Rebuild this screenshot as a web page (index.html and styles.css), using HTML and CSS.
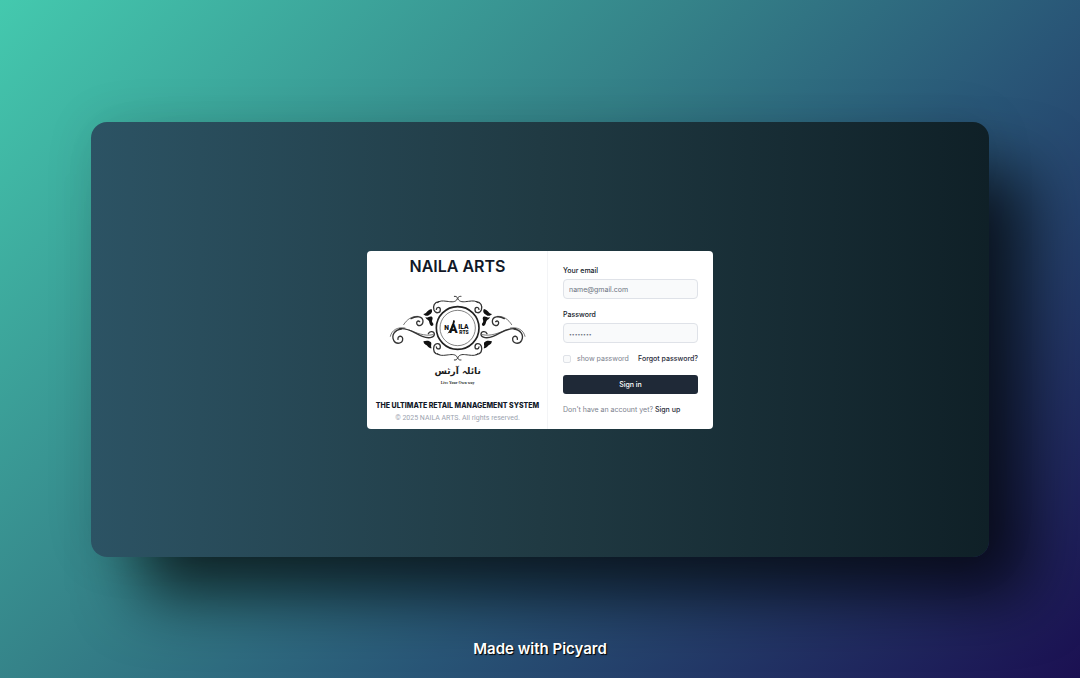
FILE: index.html
```html
<!DOCTYPE html>
<html lang="en">
<head>
<meta charset="utf-8">
<title>Naila Arts</title>
<link rel="stylesheet" href="styles.css">
</head>
<body class="page">
<main class="window">
  <div class="card">
    <section class="brand">
      <h1 class="brand-name">NAILA ARTS</h1>
      <svg class="logo" viewBox="84 156 426 285" role="img" aria-label="Naila Arts logo">
        <defs>
          <g id="corner" fill="none" stroke="#333" stroke-linecap="round">
            <path stroke-width="3" d="M286 169C294 168 298 174 293 180C286 188 274 185 264 184C249 182 242 182 235 188"/>
            <path stroke-width="4" d="M240 185C226 186 221 198 225 210C230 222 244 220 244 209C244 200 233 200 232 208"/>
          </g>
          <g id="side">
            <use href="#corner"/>
            <use href="#corner" transform="matrix(1 0 0 -1 0 529)"/>
            <g fill="none" stroke="#333" stroke-linecap="round">
              <path stroke-width="2" d="M94 289C98 270 116 260 138 264"/>
              <path stroke-width="4" d="M122 266C152 263 169 282 190 289C207 296 225 294 226 283C226 273 211 272 208 281"/>
              <path stroke-width="2" d="M150 270C172 278 195 290 222 284"/>
              <path stroke-width="4" d="M127 267C106 270 97 286 104 301C112 315 132 311 131 296C130 285 115 287 117 298"/>
              <path stroke-width="2" d="M134 254C144 238 158 228 177 229"/>
              <path stroke-width="4" d="M156 236C173 226 191 230 192 243C192 259 174 261 173 249C173 243 178 241 182 245"/>
            </g>
            <g fill="#111">
              <path d="M193 222C203 221 206 209 217 207C222 214 218 221 211 224C205 230 197 228 193 222Z"/>
              <path d="M199 232C208 234 211 227 219 230C224 236 217 240 220 247C225 252 224 258 218 258C210 253 212 246 209 242C205 238 202 238 199 232Z"/>
              <path d="M193 304C201 301 212 301 216 307C219 314 214 317 218 325C207 324 206 316 200 314C193 311 195 307 193 304Z"/>
            </g>
          </g>
        </defs>
        <use href="#side"/>
        <use href="#side" transform="matrix(-1 0 0 1 592 0)"/>
        <circle cx="296" cy="264" r="64" fill="#fff" stroke="#222" stroke-width="5"/>
        <circle cx="296" cy="264" r="53" fill="none" stroke="#444" stroke-width="2"/>
        <g class="logo-mark">
          <text x="256" y="271" font-size="20">N</text>
          <text x="270" y="278" font-size="38">A</text>
          <text x="298" y="267" font-size="20">ILA</text>
          <text x="301" y="283" font-size="15">RTS</text>
        </g>
        <path d="M283 240C279 258 274 270 265 281C278 273 285 258 288 242Z" fill="#111"/>
        <text class="logo-urdu" x="296" y="402" font-size="27">نائلہ آرٹس</text>
        <text class="logo-tagline" x="296" y="431" font-size="12">Live Your Own way</text>
      </svg>
      <p class="slogan">THE ULTIMATE RETAIL MANAGEMENT SYSTEM</p>
      <p class="copyright">© 2025 NAILA ARTS. All rights reserved.</p>
    </section>
    <form class="login">
      <label class="label" for="email">Your email</label>
      <input class="field" id="email" type="email" placeholder="name@gmail.com">
      <label class="label" for="password">Password</label>
      <input class="field field-dots" id="password" type="password" placeholder="••••••••">
      <div class="options">
        <input class="check" id="show" type="checkbox">
        <label class="muted" for="show">show password</label>
        <a class="link forgot" href="#">Forgot password?</a>
      </div>
      <button class="submit" type="button">Sign in</button>
      <p class="signup muted">Don't have an account yet? <a class="link" href="#">Sign up</a></p>
    </form>
  </div>
</main>
<footer class="credit">Made with Picyard</footer>
</body>
</html>
```
FILE: styles.css
```css
* {
  box-sizing: border-box;
}

.page {
  margin: 0;
  min-height: 100vh;
  padding: 122px 91px 18px;
  display: flex;
  flex-direction: column;
  background: linear-gradient(135deg, #44c9ae 0%, #358389 39%, #295677 62%, #1b1052 100%);
  font-family: Inter, "Open Sans", sans-serif;
  color: #111827;
}

.window {
  flex: 1;
  display: flex;
  align-items: center;
  justify-content: center;
  padding-top: 1px;
  border-radius: 16px;
  background: linear-gradient(to right, #2c5364, #203a43 50%, #0f2027);
  box-shadow: 0 0 50px rgba(0, 0, 0, 0.1), 44px 44px 64px -6px rgba(0, 0, 0, 0.7);
}

.card {
  display: flex;
  border-radius: 4px;
  overflow: hidden;
  background: #fff;
}

.brand {
  display: flex;
  flex-direction: column;
  align-items: center;
  width: 181px;
  padding: 5px 0 4px 1px;
  border-right: 1px solid #f3f4f6;
  text-align: center;
}

.brand-name {
  margin: 0;
  font-size: 16px;
  line-height: 20px;
  font-weight: 600;
}

.logo {
  width: 142px;
  height: 95px;
  margin: 16px 0 13px;
}

.logo-mark {
  font-family: Roboto, sans-serif;
  font-weight: 900;
  fill: #111;
}

.logo-urdu {
  font-family: "DejaVu Sans", sans-serif;
  font-weight: 700;
  text-anchor: middle;
  fill: #1c1c1c;
}

.logo-tagline {
  font-family: "Liberation Serif", serif;
  font-weight: 700;
  text-anchor: middle;
  fill: #333;
}

.slogan {
  margin: 0;
  font-size: 7px;
  line-height: 12px;
  font-weight: 800;
}

.copyright {
  margin: 0;
  font-family: Roboto, sans-serif;
  font-size: 7px;
  line-height: 13px;
  color: #9ca3af;
}

.login {
  width: 165px;
  padding: 15px 15px 14px;
  display: flex;
  flex-direction: column;
  font-size: 7px;
  line-height: 10px;
}

.label {
  margin-bottom: 3px;
  font-weight: 500;
}

.field {
  height: 20px;
  margin: 0 0 11px;
  padding: 0 5px;
  border: 1px solid #dfe2e8;
  border-radius: 4px;
  background: #f9fafb;
  font: inherit;
  color: #111827;
}

.field::placeholder {
  color: #6b7280;
}

.field-dots::placeholder {
  font-size: 5px;
}

.options {
  display: flex;
  align-items: center;
  gap: 6px;
}

.check {
  appearance: none;
  width: 8px;
  height: 8px;
  margin: 0;
  border: 1px solid #dfe2e8;
  border-radius: 2px;
  background: #f9fafb;
}

.muted {
  color: #7c828e;
}

.link {
  color: #1f2937;
  font-weight: 500;
  text-decoration: none;
}

.forgot {
  margin-left: auto;
}

.submit {
  height: 19px;
  margin: 11px 0;
  border: 0;
  border-radius: 3px;
  background: #1f2937;
  color: #fff;
  font: inherit;
  font-weight: 500;
}

.signup {
  margin: 0;
}

.credit {
  padding-top: 80px;
  text-align: center;
  font-size: 15px;
  line-height: 23px;
  font-weight: 600;
  color: #fff;
  text-shadow: 1px 1px 1px #000;
}
```
